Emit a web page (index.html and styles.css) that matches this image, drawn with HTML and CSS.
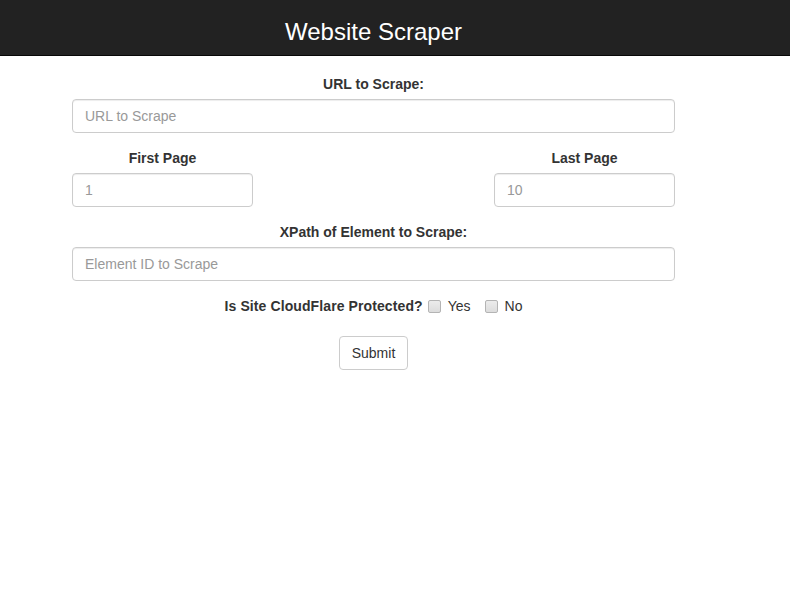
FILE: index.html
```html
<!DOCTYPE html>
<html>
<head>
<meta charset="utf-8">
<title>Website Scraper</title>
<link rel="stylesheet" href="styles.css">
</head>
<body>
<header class="topbar">
  <div class="column">
    <h1 class="title">Website Scraper</h1>
  </div>
</header>
<main class="column form">
  <div class="group center">
    <label class="lbl" for="url">URL to Scrape:</label>
    <input class="field" id="url" type="text" placeholder="URL to Scrape">
  </div>
  <div class="group pages">
    <div class="page">
      <label class="lbl" for="first">First Page</label>
      <input class="field" id="first" type="text" placeholder="1">
    </div>
    <div class="page">
      <label class="lbl" for="last">Last Page</label>
      <input class="field" id="last" type="text" placeholder="10">
    </div>
  </div>
  <div class="group center">
    <label class="lbl" for="xpath">XPath of Element to Scrape:</label>
    <input class="field" id="xpath" type="text" placeholder="Element ID to Scrape">
  </div>
  <div class="group checks">
    <span class="lbl">Is Site CloudFlare Protected?</span>
    <label class="opt"><input class="box" type="checkbox"> Yes</label>
    <label class="opt"><input class="box" type="checkbox"> No</label>
  </div>
  <div class="actions">
    <button class="btn" type="button">Submit</button>
  </div>
</main>
</body>
</html>
```
FILE: styles.css
```css
* { box-sizing: border-box; }
html, body { margin: 0; padding: 0; background: #fff; }
body {
  font-family: "Liberation Sans", Arial, sans-serif;
  font-size: 14px;
  line-height: 20px;
  color: #333;
}
.column {
  width: 603px;
  margin-left: 72px;
}
.topbar {
  background: #222;
  height: 56px;
  border-bottom: 1px solid #080808;
  overflow: hidden;
}
.title {
  margin: 0;
  text-align: center;
  font-weight: normal;
  font-size: 24px;
  line-height: 55px;
  padding-top: 4px;
  color: #fff;
}
.form { padding-top: 18px; }
.group {
  margin-bottom: 15px;
}
.center { display: flex; flex-direction: column; align-items: center; }
.lbl {
  display: inline-block;
  font-weight: bold;
  margin-bottom: 5px;
  line-height: 20px;
}
.field {
  display: block;
  width: 100%;
  height: 34px;
  padding: 6px 12px;
  font-family: inherit;
  font-size: 14px;
  line-height: 20px;
  color: #555;
  background: #fff;
  border: 1px solid #ccc;
  border-radius: 4px;
  box-shadow: inset 0 1px 1px rgba(0,0,0,.075);
}
.field::placeholder { color: #999; }
.pages { display: flex; justify-content: space-between; }
.page { width: 181px; display: flex; flex-direction: column; align-items: center; }
.checks {
  display: flex;
  justify-content: center;
  align-items: center;
  height: 20px;
  margin-top: 1px;
  margin-bottom: 20px;
}
.checks .lbl { margin: 0 5px 0 0; letter-spacing: 0.1px; }
.opt { display: inline-flex; align-items: center; margin-right: 14px; }
.opt:last-child { margin-right: 0; }
.box {
  -webkit-appearance: none;
  appearance: none;
  width: 13px;
  height: 13px;
  margin: 1px 7px 0 0;
  border: 1px solid #b4b4b4;
  border-radius: 2px;
  background: linear-gradient(#ececec, #dcdcdc);
}
.actions { display: flex; justify-content: center; }
.btn {
  font-family: inherit;
  font-size: 14px;
  line-height: 20px;
  padding: 6px 12px;
  color: #333;
  background: #fff;
  border: 1px solid #ccc;
  border-radius: 4px;
}
```
